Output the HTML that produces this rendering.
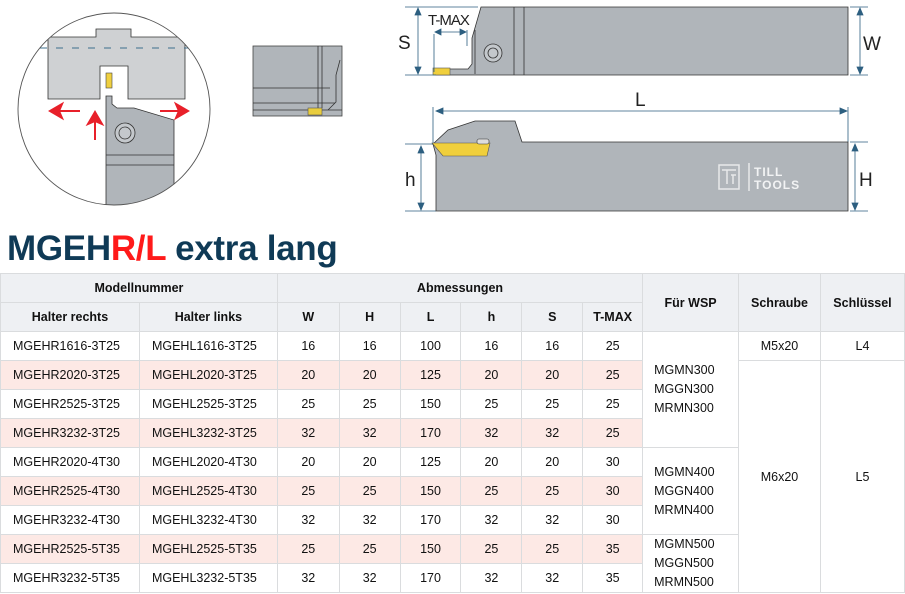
<!DOCTYPE html>
<html><head><meta charset="utf-8"><style>
*{margin:0;padding:0;box-sizing:border-box}
body{width:905px;height:594px;background:#fff;position:relative;overflow:hidden;font-family:"Liberation Sans",Arial,sans-serif}
svg.d{position:absolute;left:0;top:0}
h1{position:absolute;left:7px;top:229px;font-size:35px;font-weight:bold;color:#0f3a56;letter-spacing:-0.3px;white-space:nowrap}
h1 span{color:#ff1a1a}
table{position:absolute;left:0;top:273px;border-collapse:collapse;font-size:12.5px;color:#111;table-layout:fixed}
td,th{border:1px solid #dadcde;text-align:center;height:29px;padding:0;white-space:nowrap}
th{background:#eef0f3;font-weight:bold;font-size:12.5px}
tr.p td.c{background:#fde9e5}
td.l{text-align:left;padding-left:12px}
td.w{background:#fff;line-height:19px;text-align:left;padding-left:11px}
</style></head><body>
<svg class="d" width="905" height="230" viewBox="0 0 905 230">
<defs><clipPath id="cc"><circle cx="114" cy="109" r="96"/></clipPath></defs>
<g clip-path="url(#cc)">
<path d="M48 37 H96 V29 H131 V37 H185 V99 H128 V66 H100 V99 H48 Z" fill="#cfd1d3" stroke="#333" stroke-width="0.8"/>
<line x1="40" y1="48" x2="190" y2="48" stroke="#3d6f8c" stroke-width="1" stroke-dasharray="7,9"/>
<path d="M106 205 V96 H112 V104 L117 108 H134 L174 120 V205 Z" fill="#b0b5ba" stroke="#333" stroke-width="0.8"/>
<rect x="106" y="73" width="6" height="15" fill="#f0d040" stroke="#444" stroke-width="0.6"/>
<line x1="106" y1="155" x2="174" y2="155" stroke="#333" stroke-width="0.8"/>
<line x1="106" y1="165" x2="174" y2="165" stroke="#333" stroke-width="0.8"/>
<circle cx="125" cy="133" r="10" fill="#c4c8cc" stroke="#333" stroke-width="0.8"/>
<circle cx="125" cy="133" r="6" fill="none" stroke="#333" stroke-width="0.8"/>
</g>
<circle cx="114" cy="109" r="96" fill="none" stroke="#555" stroke-width="0.9"/>
<g fill="#e8202a" stroke="#e8202a" stroke-width="2">
<line x1="80" y1="111" x2="58" y2="111"/><path d="M50 111 L62 104 L59 111 L62 118Z"/>
<line x1="95" y1="140" x2="95" y2="120"/><path d="M95 112 L88 124 L95 121 L102 124Z"/>
<line x1="160" y1="111" x2="180" y2="111"/><path d="M188 111 L176 104 L179 111 L176 118Z"/>
</g>
<rect x="253" y="46" width="89" height="70" fill="#b0b5ba" stroke="#444" stroke-width="0.8"/>
<path d="M318 46 V108 M322 46 V108 M253 88 H330 M253 103 H335 M253 110 H342 M340 60 L336 75 V102 L328 110" fill="none" stroke="#333" stroke-width="0.8"/>
<rect x="308" y="108" width="14" height="7" fill="#e9cd3e" stroke="#555" stroke-width="0.6"/>
<path d="M481 7 H848 V75 H436 V69 H468 L472 64 V38 Z" fill="#b0b5ba" stroke="#333" stroke-width="0.8"/>
<rect x="433" y="68" width="17" height="7" fill="#f0cf3c" stroke="#555" stroke-width="0.6"/>
<path d="M475 30 V74 M514 7 V75 M524 7 V75" stroke="#333" stroke-width="0.8"/>
<circle cx="493" cy="53" r="9" fill="#c4c8cc" stroke="#333" stroke-width="0.8"/>
<circle cx="493" cy="53" r="5" fill="none" stroke="#333" stroke-width="0.8"/>
<g stroke="#2d5f80" stroke-width="0.8" fill="#2d5f80">
<path d="M405 7 H478 M405 75 H436 M418 10 V72 M850 7 H868 M850 75 H868 M860 10 V72 M434 34 V72 M467 30 V46 M436 32 H466"/>
<path d="M418 8 L415 15 H421Z M418 74 L415 67 H421Z M860 8 L857 15 H863Z M860 74 L857 67 H863Z M435 32 L441 29 V35Z M466 32 L460 29 V35Z"/>
<path d="M433 107 V145 M848 107 V142 M437 111 H846 M405 144 H433 M405 211 H436 M421 147 V209 M850 142 H868 M850 211 H868 M855 145 V209"/>
<path d="M436 111 L443 108 V114Z M847 111 L840 108 V114Z M421 146 L418 153 H424Z M421 210 L418 203 H424Z M855 144 L852 151 H858Z M855 210 L852 203 H858Z"/>
</g>
<text x="398" y="49" font-size="19" fill="#222" font-family="Liberation Sans">S</text>
<text x="428" y="25" font-size="15" fill="#222" font-family="Liberation Sans" letter-spacing="-1">T-MAX</text>
<text x="863" y="50" font-size="19" fill="#222" font-family="Liberation Sans">W</text>
<text x="635" y="106" font-size="19" fill="#222" font-family="Liberation Sans">L</text>
<text x="405" y="186" font-size="19" fill="#222" font-family="Liberation Sans">h</text>
<text x="859" y="186" font-size="19" fill="#222" font-family="Liberation Sans">H</text>
<path d="M436 211 V155 L433 144 L448 130 L475 121 L515 121 L522 142 H848 V211 Z" fill="#b0b5ba" stroke="#333" stroke-width="0.8"/>
<path d="M432 143 H490 L487 156 H443 Z" fill="#f0cf3c" stroke="#555" stroke-width="0.6"/>
<rect x="477" y="139" width="12" height="5" rx="2" fill="#ddd" stroke="#333" stroke-width="0.6"/>
<g fill="none" stroke="#f2f3f4" stroke-width="1.5" opacity="0.85">
<rect x="719" y="165" width="20" height="24"/><path d="M722 170 H736 M727 170 V184 M731 175 H736 M733 175 V184 M749 163 V191"/>
</g>
<text x="754" y="176" font-size="12" font-weight="bold" fill="#f2f3f4" font-family="Liberation Sans" letter-spacing="1">TILL</text>
<text x="754" y="189" font-size="12" font-weight="bold" fill="#f2f3f4" font-family="Liberation Sans" letter-spacing="1">TOOLS</text>
</svg>
<h1>MGEH<span>R/L</span> extra lang</h1>
<table>
<colgroup><col style="width:139px"><col style="width:138px"><col style="width:62px"><col style="width:61px"><col style="width:61px"><col style="width:61px"><col style="width:61px"><col style="width:60px"><col style="width:96px"><col style="width:82px"><col style="width:84px"></colgroup>
<tr><th colspan="2">Modellnummer</th><th colspan="6">Abmessungen</th><th rowspan="2">Für WSP</th><th rowspan="2">Schraube</th><th rowspan="2">Schlüssel</th></tr>
<tr><th>Halter rechts</th><th>Halter links</th><th>W</th><th>H</th><th>L</th><th>h</th><th>S</th><th>T-MAX</th></tr>
<tr><td class="c l">MGEHR1616-3T25</td><td class="c l">MGEHL1616-3T25</td><td class="c">16</td><td class="c">16</td><td class="c">100</td><td class="c">16</td><td class="c">16</td><td class="c">25</td><td rowspan="4" class="w">MGMN300<br>MGGN300<br>MRMN300</td><td>M5x20</td><td>L4</td></tr>
<tr class="p"><td class="c l">MGEHR2020-3T25</td><td class="c l">MGEHL2020-3T25</td><td class="c">20</td><td class="c">20</td><td class="c">125</td><td class="c">20</td><td class="c">20</td><td class="c">25</td><td rowspan="8">M6x20</td><td rowspan="8">L5</td></tr>
<tr><td class="c l">MGEHR2525-3T25</td><td class="c l">MGEHL2525-3T25</td><td class="c">25</td><td class="c">25</td><td class="c">150</td><td class="c">25</td><td class="c">25</td><td class="c">25</td></tr>
<tr class="p"><td class="c l">MGEHR3232-3T25</td><td class="c l">MGEHL3232-3T25</td><td class="c">32</td><td class="c">32</td><td class="c">170</td><td class="c">32</td><td class="c">32</td><td class="c">25</td></tr>
<tr><td class="c l">MGEHR2020-4T30</td><td class="c l">MGEHL2020-4T30</td><td class="c">20</td><td class="c">20</td><td class="c">125</td><td class="c">20</td><td class="c">20</td><td class="c">30</td><td rowspan="3" class="w">MGMN400<br>MGGN400<br>MRMN400</td></tr>
<tr class="p"><td class="c l">MGEHR2525-4T30</td><td class="c l">MGEHL2525-4T30</td><td class="c">25</td><td class="c">25</td><td class="c">150</td><td class="c">25</td><td class="c">25</td><td class="c">30</td></tr>
<tr><td class="c l">MGEHR3232-4T30</td><td class="c l">MGEHL3232-4T30</td><td class="c">32</td><td class="c">32</td><td class="c">170</td><td class="c">32</td><td class="c">32</td><td class="c">30</td></tr>
<tr class="p"><td class="c l">MGEHR2525-5T35</td><td class="c l">MGEHL2525-5T35</td><td class="c">25</td><td class="c">25</td><td class="c">150</td><td class="c">25</td><td class="c">25</td><td class="c">35</td><td rowspan="2" class="w">MGMN500<br>MGGN500<br>MRMN500</td></tr>
<tr><td class="c l">MGEHR3232-5T35</td><td class="c l">MGEHL3232-5T35</td><td class="c">32</td><td class="c">32</td><td class="c">170</td><td class="c">32</td><td class="c">32</td><td class="c">35</td></tr>
</table>
</body></html>
